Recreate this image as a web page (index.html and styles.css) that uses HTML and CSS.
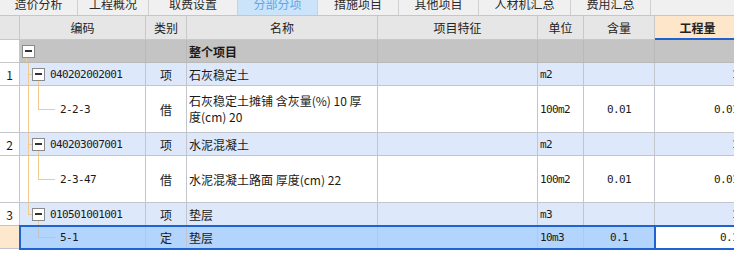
FILE: index.html
```html
<!DOCTYPE html>
<html>

<head>
    <meta charset="utf-8">
    <title>分部分项</title>
    <link rel="stylesheet" href="styles.css">
</head>

<body>
    <div class="tabs">
        <span class="tab">造价分析</span>
        <span class="tab">工程概况</span>
        <span class="tab">取费设置</span>
        <span class="tab on">分部分项</span>
        <span class="tab">措施项目</span>
        <span class="tab">其他项目</span>
        <span class="tab">人材机汇总</span>
        <span class="tab">费用汇总</span>
    </div>

    <div class="grid">
        <div class="row head">
            <div class="cell num"></div>
            <div class="cell code">编码</div>
            <div class="cell kind">类别</div>
            <div class="cell name">名称</div>
            <div class="cell feat">项目特征</div>
            <div class="cell unit">单位</div>
            <div class="cell qty">含量</div>
            <div class="cell amt hot">工程量</div>
        </div>

        <div class="row root">
            <div class="cell num"></div>
            <div class="cell code t-root"><i class="fold"></i></div>
            <div class="cell kind"></div>
            <div class="cell name"><b>整个项目</b></div>
            <div class="cell feat"></div>
            <div class="cell unit"></div>
            <div class="cell qty"></div>
            <div class="cell amt"></div>
        </div>

        <div class="row item">
            <div class="cell num">1</div>
            <div class="cell code t-par"><i class="fold"></i><span class="mono">040202002001</span></div>
            <div class="cell kind">项</div>
            <div class="cell name">石灰稳定土</div>
            <div class="cell feat"></div>
            <div class="cell unit mono">m2</div>
            <div class="cell qty"></div>
            <div class="cell amt mono">1</div>
        </div>

        <div class="row tall">
            <div class="cell num"></div>
            <div class="cell code t-kid"><span class="mono">2-2-3</span></div>
            <div class="cell kind">借</div>
            <div class="cell name wrap">石灰稳定土摊铺 含灰量(%) 10 厚<br>度(cm) 20</div>
            <div class="cell feat"></div>
            <div class="cell unit mono">100m2</div>
            <div class="cell qty mono">0.01</div>
            <div class="cell amt mono">0.01</div>
        </div>

        <div class="row item">
            <div class="cell num">2</div>
            <div class="cell code t-par"><i class="fold"></i><span class="mono">040203007001</span></div>
            <div class="cell kind">项</div>
            <div class="cell name">水泥混凝土</div>
            <div class="cell feat"></div>
            <div class="cell unit mono">m2</div>
            <div class="cell qty"></div>
            <div class="cell amt mono">1</div>
        </div>

        <div class="row tall">
            <div class="cell num"></div>
            <div class="cell code t-kid"><span class="mono">2-3-47</span></div>
            <div class="cell kind">借</div>
            <div class="cell name">水泥混凝土路面 厚度(cm) 22</div>
            <div class="cell feat"></div>
            <div class="cell unit mono">100m2</div>
            <div class="cell qty mono">0.01</div>
            <div class="cell amt mono">0.01</div>
        </div>

        <div class="row item">
            <div class="cell num">3</div>
            <div class="cell code t-last"><i class="fold"></i><span class="mono">010501001001</span></div>
            <div class="cell kind">项</div>
            <div class="cell name">垫层</div>
            <div class="cell feat"></div>
            <div class="cell unit mono">m3</div>
            <div class="cell qty"></div>
            <div class="cell amt mono">1</div>
        </div>

        <div class="row sel">
            <div class="cell num"></div>
            <div class="cell code t-end"><span class="mono">5-1</span></div>
            <div class="cell kind">定</div>
            <div class="cell name">垫层</div>
            <div class="cell feat"></div>
            <div class="cell unit mono">10m3</div>
            <div class="cell qty mono">0.1</div>
            <div class="cell amt act mono">0.1</div>
        </div>
    </div>
</body>

</html>
```

FILE: styles.css
```css
* {
    box-sizing: border-box;
}

body {
    margin: 0;
    width: 734px;
    height: 279px;
    overflow: hidden;
    background-color: white;
    font-family: "Noto Sans CJK SC", sans-serif;
    font-size: 12px;
    color: #1a1a1a;
}

/* tab strip, scrolled half out of view */
.tabs {
    display: flex;
    height: 25px;
    margin-top: -9px;
    background-color: #f0f0f0;
    border-bottom: 1px solid #c6c6c6;
}

.tab {
    display: flex;
    align-items: center;
    justify-content: center;
    flex: none;
    border-right: 1px solid #d0d0d0;
    color: #2a2a2a;
}

.tab:nth-child(1) { width: 78px; }
.tab:nth-child(2) { width: 71px; }
.tab:nth-child(3) { width: 89px; }
.tab:nth-child(4) { width: 80px; }
.tab:nth-child(5) { width: 81px; }
.tab:nth-child(6) { width: 80px; }
.tab:nth-child(7) { width: 92px; }
.tab:nth-child(8) { width: 80px; }

.tab.on {
    background-color: #cce4f9;
    color: #5ea6ec;
}

/* grid */
.grid {
    --tree: #f2ca8e;
    --grey: #c4c4c4;
    --blue: #1e63d2;
}

.row {
    display: grid;
    grid-template-columns: 20px 126px 41px 191px 160px 46px 71px 86px;
    width: 741px;
    height: 23px;
}

.cell {
    display: flex;
    align-items: center;
    padding: 0 2px;
    overflow: hidden;
    white-space: nowrap;
    border-right: 1px solid #c2c5cb;
    border-bottom: 1px solid #c2c5cb;
}

.num {
    justify-content: center;
    background-color: white;
}

.kind,
.qty {
    justify-content: center;
}

.amt {
    justify-content: flex-end;
}

.mono {
    font-family: "DejaVu Sans Mono", monospace;
    font-size: 11px;
    letter-spacing: -0.6px;
}

.wrap {
    white-space: normal;
    line-height: 16px;
}

.head {
    height: 24px;
}

.head .cell {
    justify-content: center;
    background-color: #e6e6e6;
    border-color: #c8c8c8;
    color: #222;
}

.head .hot {
    background-color: #fde6c9;
    border-bottom: 2px solid var(--blue);
    font-weight: bold;
}

.root .cell {
    background-color: #c4c4c4;
    border-color: #b9b9b9;
}

.root .num {
    background-color: white;
    border-color: #c8c8c8;
}

.item .cell {
    background-color: #dde8fb;
}

.item .num {
    background-color: white;
}

.tall {
    height: 47px;
}

/* tree lines in the code column */
.fold {
    display: flex;
    align-items: center;
    justify-content: center;
    flex: none;
    width: 13px;
    height: 13px;
    margin-right: 5px;
    border: 1px solid #8a8a8a;
    background-color: white;
}

.fold::before {
    content: "";
    width: 7px;
    height: 2px;
    background-color: #333;
}

.code {
    background-repeat: no-repeat;
}

.t-root {
    background-image: linear-gradient(var(--tree), var(--tree));
    background-size: 1px 5px;
    background-position: 6px 100%;
}

.t-par,
.t-last {
    padding-left: 12px;
    background-image:
        linear-gradient(var(--tree), var(--tree)),
        linear-gradient(var(--tree), var(--tree)),
        linear-gradient(var(--tree), var(--tree));
    background-size: 1px 100%, 4px 1px, 1px 5px;
    background-position: 8px 0, 8px 50%, 18px 100%;
}

.t-last {
    background-size: 1px 50%, 4px 1px, 1px 5px;
}

.t-kid,
.t-end {
    padding-left: 40px;
    background-image:
        linear-gradient(var(--tree), var(--tree)),
        linear-gradient(var(--tree), var(--tree)),
        linear-gradient(var(--tree), var(--tree));
    background-size: 1px 100%, 1px 50%, 17px 1px;
    background-position: 8px 0, 18px 0, 18px 50%;
}

.t-end {
    background-image:
        linear-gradient(var(--grey), var(--grey)),
        linear-gradient(var(--grey), var(--grey));
    background-size: 1px 50%, 17px 1px;
    background-position: 18px 0, 18px 50%;
}

/* selected row */
.sel {
    position: relative;
}

.sel .cell {
    background-color: #b3d4fc;
}

.sel .num {
    background-color: #fde8cd;
}

.sel .qty {
    border-right-color: var(--blue);
}

.sel .act {
    background-color: white;
    border-left: 1px solid var(--blue);
}

.sel::after {
    content: "";
    position: absolute;
    left: 19px;
    top: -1px;
    right: 0;
    bottom: -1px;
    border: 2px solid var(--blue);
    pointer-events: none;
}
```
